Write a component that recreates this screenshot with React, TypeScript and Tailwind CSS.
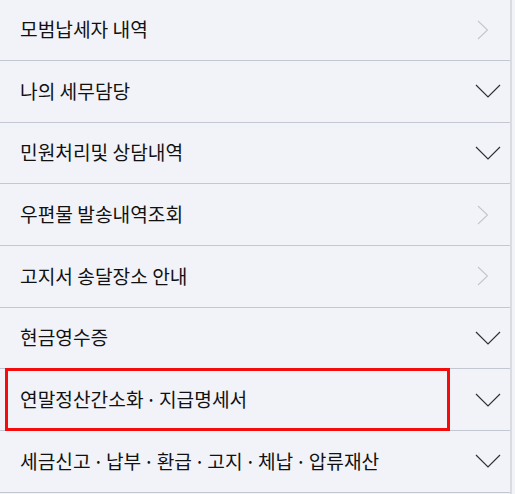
const ITEMS: { label: string; kind: "link" | "toggle"; highlight?: boolean }[] = [
  { label: "모범납세자 내역", kind: "link" },
  { label: "나의 세무담당", kind: "toggle" },
  { label: "민원처리및 상담내역", kind: "toggle" },
  { label: "우편물 발송내역조회", kind: "link" },
  { label: "고지서 송달장소 안내", kind: "link" },
  { label: "현금영수증", kind: "toggle" },
  { label: "연말정산간소화 · 지급명세서", kind: "toggle", highlight: true },
  { label: "세금신고 · 납부 · 환급 · 고지 · 체납 · 압류재산", kind: "toggle" },
];

function ChevronRight() {
  return (
    <svg width="12" height="20" viewBox="0 0 12 20" fill="none" aria-hidden="true">
      <path d="M1 1l9.5 9L1 19" stroke="#c4c6cc" strokeWidth="1.1" />
    </svg>
  );
}

function ChevronDown() {
  return (
    <svg width="26" height="14" viewBox="0 0 26 14" fill="none" aria-hidden="true">
      <path d="M1 1l12 12L25 1" stroke="#2f3033" strokeWidth="1.2" />
    </svg>
  );
}

export default function App() {
  return (
    <div className="flex h-[494px] w-[515px] overflow-hidden bg-[#f2f3f8]">
      <ul
        className="w-[512px] shrink-0 border-r-2 border-[#d9dbe1]"
        style={{ fontFamily: '"Noto Sans CJK KR", "Noto Sans", sans-serif' }}
      >
        {ITEMS.map((item, i) => (
          <li
            key={item.label}
            className={`relative flex items-center justify-between border-b border-[#c3c7d1] pl-5 ${
              i === 0 ? "h-[61px]" : "h-[61.7px]"
            }`}
          >
            {item.highlight && (
              <span className="pointer-events-none absolute top-[-1px] bottom-[-1px] left-[5px] w-[445px] border-[3px] border-[#f40b0b]" />
            )}
            <span
              className={`text-[19.2px] leading-none text-[#111111] ${
                item.label.includes("·") ? "[word-spacing:-2px]" : ""
              }`}
            >
              {item.label}
            </span>
            {item.kind === "link" ? (
              <span className="mr-[21px] flex items-center">
                <ChevronRight />
              </span>
            ) : (
              <span className="mr-[9px] flex items-center">
                <ChevronDown />
              </span>
            )}
          </li>
        ))}
      </ul>
    </div>
  );
}
